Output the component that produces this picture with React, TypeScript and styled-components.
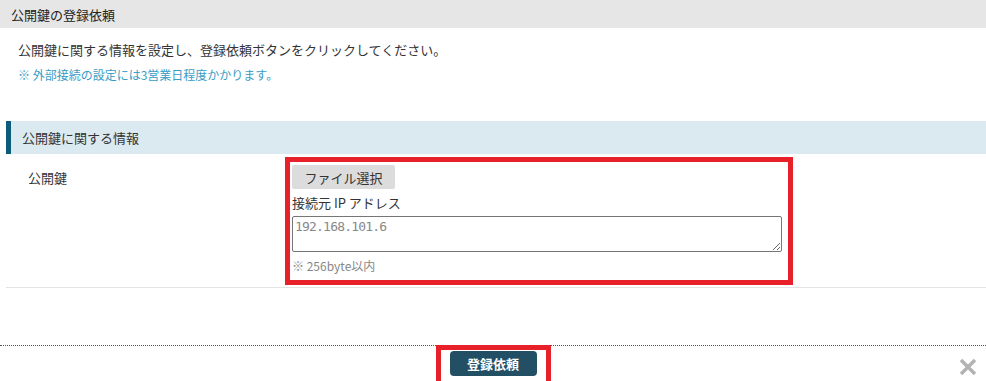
import React from "react";
import styled, { createGlobalStyle } from "styled-components";

const Global = createGlobalStyle`
  html, body { margin: 0; padding: 0; background: #fff; }
  body {
    font-family: "Noto Sans CJK JP", "Noto Sans", sans-serif;
    font-size: 13px;
    color: #333;
  }
`;

const Page = styled.div`
  width: 986px;
  height: 381px;
  overflow: hidden;
  display: flex;
  flex-direction: column;
`;

const TitleBar = styled.div`
  height: 28px;
  background: #e6e6e6;
  display: flex;
  align-items: center;
  padding-left: 11px;
  font-size: 13px;
  color: #222;
`;

const Intro = styled.div`
  padding: 12px 18px 0;
  display: flex;
  flex-direction: column;
  gap: 5px;
  line-height: 20px;
`;

const Lead = styled.p`
  margin: 0;
  color: #333;
`;

const Notice = styled.p`
  margin: 0;
  font-size: 12px;
  color: #3b9cc4;
`;

const Section = styled.div`
  margin: 36px 0 0 6px;
`;

const SectionHead = styled.div`
  height: 33px;
  background: #dbe9f0;
  border-left: 5px solid #0c5b79;
  display: flex;
  align-items: center;
  padding-left: 11px;
  color: #333;
`;

const Row = styled.div`
  display: grid;
  grid-template-columns: 279px 508px;
  border-bottom: 1px solid #e3e3e3;
  padding: 3px 0 2px;
`;

const Label = styled.div`
  padding: 11px 0 0 22px;
`;

const Highlight = styled.div`
  border: 5px solid #e8202a;
  padding: 3px 6px 0 2px;
  display: flex;
  flex-direction: column;
  align-items: flex-start;
`;

const FileButton = styled.button`
  height: 24px;
  width: 103px;
  border: none;
  border-radius: 2px;
  background: #dcdcdc;
  color: #333;
  font-family: inherit;
  font-size: 13px;
  padding: 0;
`;

const FieldLabel = styled.div`
  margin-top: 4px;
  line-height: 20px;
`;

const Area = styled.textarea`
  box-sizing: border-box;
  width: 490px;
  height: 36px;
  margin-top: 3px;
  border: 1px solid #767676;
  border-radius: 2px;
  font-family: "DejaVu Sans Mono", monospace;
  font-size: 13px;
  letter-spacing: -0.8px;
  line-height: 18px;
  padding: 1px 2px;
  resize: vertical;
  &::placeholder { color: #888; }
`;

const Hint = styled.div`
  font-size: 12px;
  color: #888;
  line-height: 20px;
  margin-top: 4px;
  margin-bottom: 4px;
`;

const Spacer = styled.div`
  flex: 1;
`;

const Footer = styled.div`
  border-top: 1px dotted #555;
  display: grid;
  grid-template-columns: 1fr auto 1fr;
  align-items: start;
  height: 35px;
`;

const SubmitFrame = styled.div`
  grid-column: 2;
  margin-top: -1px;
  border: 5px solid #e8202a;
  border-bottom: none;
  padding: 1px 9px 0;
  height: 31px;
`;

const Submit = styled.button`
  width: 87px;
  height: 25px;
  border: none;
  border-radius: 4px;
  background: #234f64;
  color: #fff;
  font-family: inherit;
  font-size: 13px;
  font-weight: bold;
  padding: 0;
`;

const Close = styled.button`
  justify-self: end;
  margin: 12px 9px 0 0;
  width: 18px;
  height: 18px;
  padding: 0;
  border: none;
  background: none;
`;

export default function App() {
  return (
    <Page>
      <Global />
      <TitleBar>公開鍵の登録依頼</TitleBar>
      <Intro>
        <Lead>公開鍵に関する情報を設定し、登録依頼ボタンをクリックしてください。</Lead>
        <Notice>※ 外部接続の設定には3営業日程度かかります。</Notice>
      </Intro>
      <Section>
        <SectionHead>公開鍵に関する情報</SectionHead>
        <Row>
          <Label>公開鍵</Label>
          <Highlight>
            <FileButton>ファイル選択</FileButton>
            <FieldLabel>接続元 IP アドレス</FieldLabel>
            <Area placeholder="192.168.101.6" />
            <Hint>※ 256byte以内</Hint>
          </Highlight>
        </Row>
      </Section>
      <Spacer />
      <Footer>
        <SubmitFrame>
          <Submit>登録依頼</Submit>
        </SubmitFrame>
        <Close aria-label="閉じる">
          <svg width="18" height="18" viewBox="0 0 18 18">
            <path d="M2 2 L16 16 M16 2 L2 16" stroke="#b3b3b3" strokeWidth="3.5" strokeLinecap="butt" />
          </svg>
        </Close>
      </Footer>
    </Page>
  );
}
